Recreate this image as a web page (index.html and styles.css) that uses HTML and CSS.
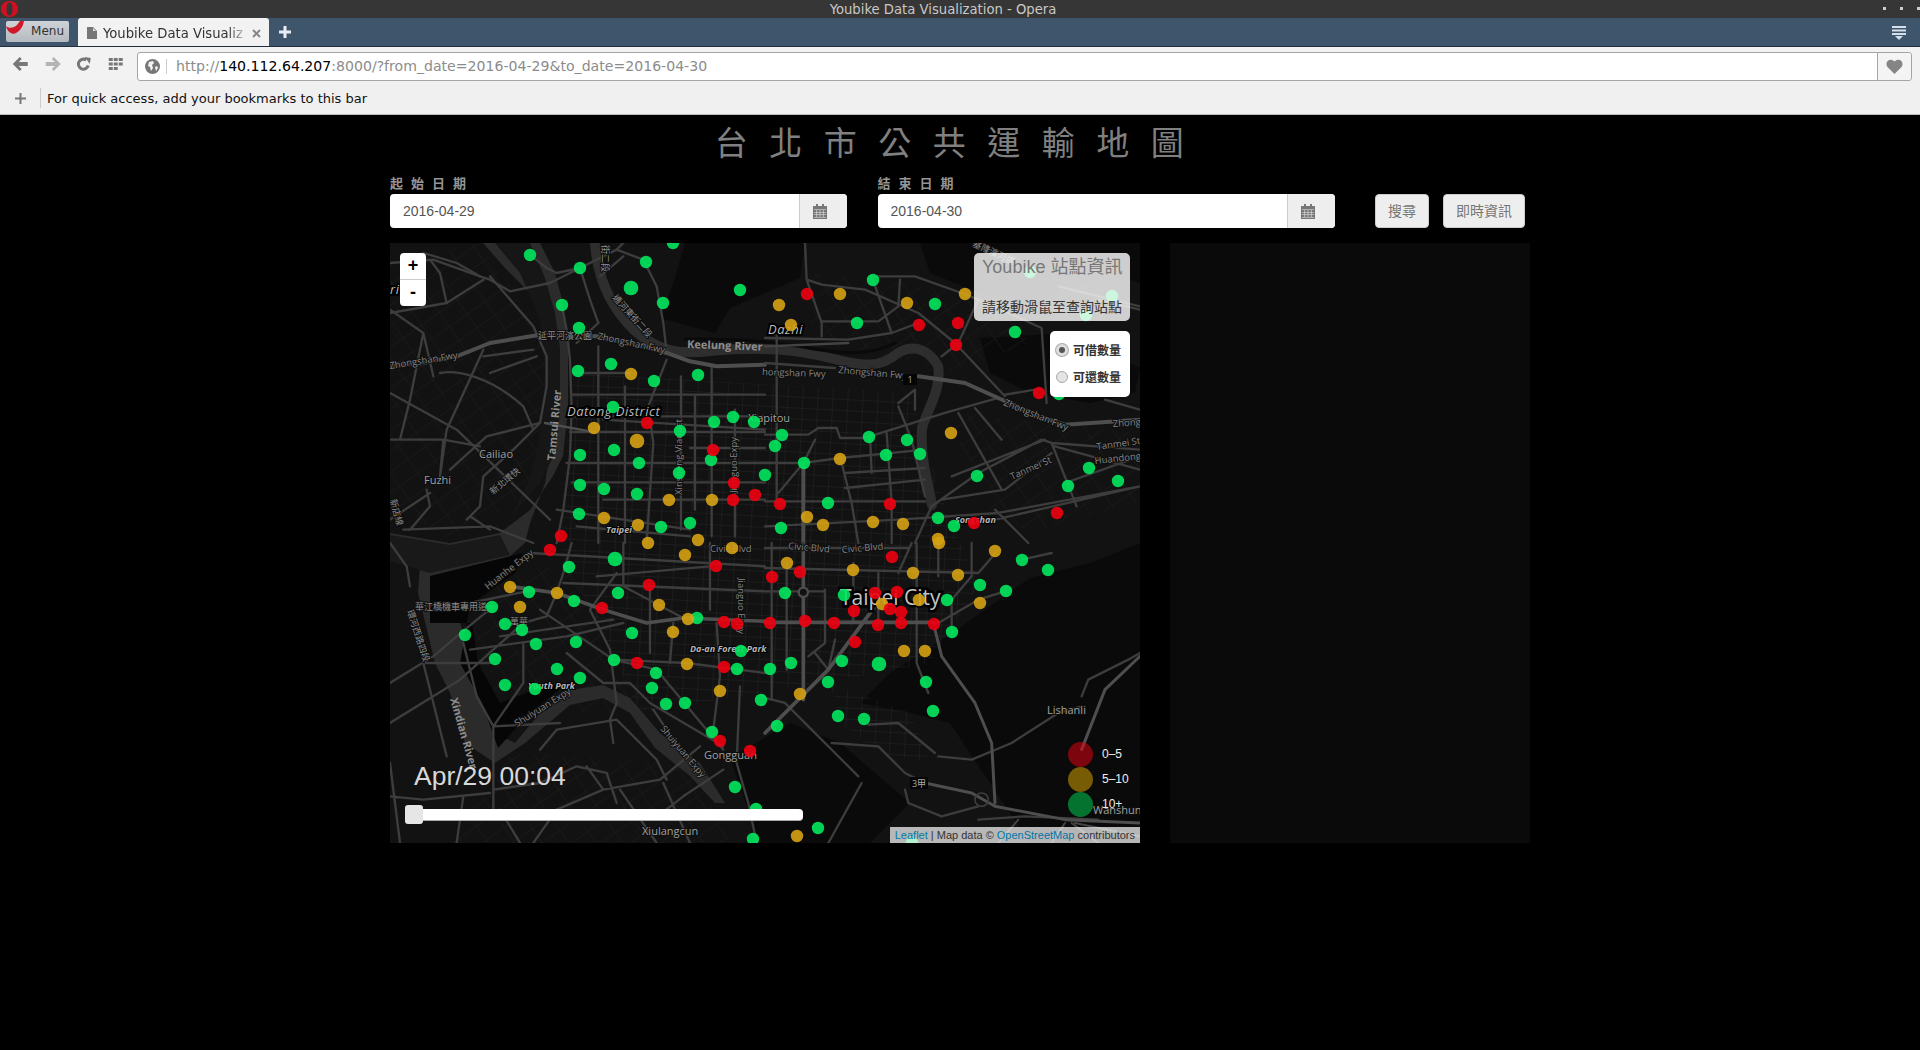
FILE: index.html
```html
<!DOCTYPE html>
<html lang="zh-Hant">
<head>
  <meta charset="UTF-8">
  <title>Youbike Data Visualization - Opera</title>
  <link rel="stylesheet" href="styles.css">
</head>
<body>
  <div class="titlebar">
    <svg class="opera-logo" width="19" height="18" viewBox="0 0 19 18"><path fill="#d01020" fill-rule="evenodd" d="M9.500 1c5 0 8.500 3.500 8.500 8s-3.500 8-8.500 8S1 13.500 1 9s3.500-8 8.500-8zm0 1.500C7.500 2.500 6.500 5 6.500 9s1 6.500 3 6.500 3-2.500 3-6.500-1-6.500-3-6.500z"/></svg>
    <span class="window-title">Youbike Data Visualization - Opera</span>
    <div class="window-btns"><i></i><i></i><i></i></div>
  </div>

  <div class="tabbar">
    <div class="menu-btn">
      <svg class="menu-logo" width="18" height="15" viewBox="0 0 18 15"><path fill="#d01828" d="M0 5c3 3 8 2 11-1l3-4h4c-1 7-7 14-12 12.500C3 11.500 1 9 0 5z"/></svg>
      <span>Menu</span>
    </div>
    <div class="tab">
      <svg width="10" height="12" viewBox="0 0 10 12"><path fill="#777" d="M0 0h6l4 4v8H0z"/><path fill="#ddd" d="M6 1v3h3z"/></svg>
      <span class="tab-title">Youbike Data Visualiz</span>
      <svg width="9" height="9" viewBox="0 0 9 9"><path stroke="#888" stroke-width="2" d="M1 1l7 7M8 1L1 8"/></svg>
    </div>
    <svg class="new-tab" width="12" height="12" viewBox="0 0 12 12"><path stroke="#e8eef4" stroke-width="3" d="M6 0v12M0 6h12"/></svg>
    <svg class="tab-list" width="14" height="14" viewBox="0 0 14 14"><path fill="#d5e0ea" d="M0 0h14v2H0zM0 3.500h14v2H0zM0 7h14v2H0zM3 10h8l-4 4z"/></svg>
  </div>

  <div class="toolbar">
    <svg class="nav-icon" width="16" height="14" viewBox="0 0 16 14"><path fill="#777" d="M7 0l2 2-3 3h9v4H6l3 3-2 2-7-7z"/></svg>
    <svg class="nav-icon" width="16" height="14" viewBox="0 0 16 14"><path fill="#b4b4b4" d="M9 0L7 2l3 3H1v4h9l-3 3 2 2 7-7z"/></svg>
    <svg class="nav-icon" width="14" height="14" viewBox="0 0 14 14"><path fill="none" stroke="#777" stroke-width="3" d="M11.500 8.500A5 5 0 1 1 9.500 3"/><path fill="#777" d="M8 0l6 1-1 6z"/></svg>
    <svg class="nav-icon" width="14" height="14" viewBox="0 0 14 14"><path fill="#777" d="M0 1h4v3H0zM5 1h4v3H5zM10 1h4v3h-4zM0 5.500h4v3H0zM5 5.500h4v3H5zM10 5.500h4v3h-4zM0 10h4v3H0zM5 10h4v3H5z"/></svg>
    <div class="address">
      <div class="site-icon">
        <svg width="15" height="15" viewBox="0 0 15 15"><circle cx="7.500" cy="7.500" r="7.500" fill="#777"/><path fill="#f4f4f4" d="M4 3l4-1 1 2-2 2 1 3-2 3-1-4-2-1zM10 8l2-1 1 2-2 3z"/></svg>
      </div>
      <div class="url"><span class="url-dim">http://</span>140.112.64.207<span class="url-dim">:8000/?from_date=2016-04-29&amp;to_date=2016-04-30</span></div>
      <div class="heart">
        <svg width="17" height="15" viewBox="0 0 17 15"><path fill="#858585" d="M8.500 15L1.500 8C-2 3 4-2 8.500 2.500 13-2 19 3 15.500 8z"/></svg>
      </div>
    </div>
  </div>

  <div class="bookmarks">
    <svg width="11" height="11" viewBox="0 0 11 11"><path stroke="#777" stroke-width="2" d="M5.500 0v11M0 5.500h11"/></svg>
    <span class="bookmarks-sep"></span>
    <span>For quick access, add your bookmarks to this bar</span>
  </div>

  <div class="page">
    <h1 class="page-title">台北市公共運輸地圖</h1>

    <div class="date-row">
      <div class="date-col">
        <label class="date-label">起始日期</label>
        <div class="input-group">
          <div class="date-input">2016-04-29</div>
          <div class="addon"><svg width="14" height="15" viewBox="0 0 14 15"><use href="#cal"/></svg></div>
        </div>
      </div>
      <div class="date-col">
        <label class="date-label">結束日期</label>
        <div class="input-group">
          <div class="date-input">2016-04-30</div>
          <div class="addon"><svg width="14" height="15" viewBox="0 0 14 15"><use href="#cal"/></svg></div>
        </div>
      </div>
      <div class="btn-col">
        <button class="btn">搜尋</button>
        <button class="btn">即時資訊</button>
      </div>
    </div>

    <div class="main-row">
      <div class="map">
        <svg class="map-base" width="750" height="600" viewBox="0 0 750 600">
          <defs>
            <symbol id="cal" viewBox="0 0 14 15">
              <path fill="#777" d="M0 2h3V0h2v2h4V0h2v2h3v13H0z"/>
              <path fill="#ececec" d="M1 5.500h12v.6H1zM1 8h12v.6H1zM1 10.500h12v.6H1zM1 13h12v.6H1zM3.500 5.500h.6v8h-.6zM6.700 5.500h.6v8h-.6zM9.900 5.500h.6v8h-.6z"/>
            </symbol>
            <pattern id="blocks" width="15" height="11" patternUnits="userSpaceOnUse" patternTransform="rotate(3)">
              <path fill="none" stroke="#262626" stroke-width="1" d="M0 0h15M0 0v11"/>
            </pattern>
            <pattern id="blocks2" width="22" height="17" patternUnits="userSpaceOnUse" patternTransform="rotate(-35)">
              <path fill="none" stroke="#1e1e1e" stroke-width="1" d="M0 0h22M0 0v17"/>
            </pattern>
          </defs>

          <!-- hills -->
          <g fill="#0a0a0a">
            <path d="M295 0H415L410 35 340 65 325 90 270 75 285 35z"/>
            <path d="M530 0H750V40L720 30 640 60 590 50 540 30z"/>
            <path d="M590 95L680 90 750 125 745 150 700 160 640 150 600 130z"/>
            <path d="M555 395L640 335 700 320 750 300V600H640L600 540 560 480 520 470 470 460 500 430z"/>
            <path d="M340 515L400 480 450 500 520 560 480 600H370z"/>
          </g>

          <!-- built up areas -->
          <path fill="url(#blocks)" d="M180 130L520 150 560 280 590 340 540 420 430 440 250 470 170 300z"/>
          <path fill="url(#blocks2)" d="M0 20L90 0 165 110 145 240 70 300 0 260z"/>
          <path fill="url(#blocks2)" d="M30 350L180 320 260 470 110 470 60 450z"/>
          <path fill="url(#blocks2)" d="M420 30L600 50 640 100 560 130 420 95z"/>
          <path fill="url(#blocks2)" d="M560 170L750 190 750 260 640 290 590 260z"/>
          <path fill="url(#blocks2)" d="M120 510L300 520 340 600H60z"/>
          <path fill="url(#blocks)" d="M440 440L520 470 540 520 490 510 450 480z"/>

          <!-- water -->
          <path fill="#2b2b2b" d="M93 0H150L165 30 173 60 176 80 178 100 178 167 173 213 163 233 140 267 110 290 60 300 0 290V318L30 322 28 350 45 420 60 450 75 500 105 520 135 500 180 462 213 455 240 470 265 505 300 533 325 560 335 560 310 520 270 490 240 455 213 442 180 447 150 470 125 500 105 490 90 440 70 380 50 340 110 322 135 300 140 280 155 240 160 210 157 170 157 110 152 80 140 50 115 25z"/>
          <path fill="#191919" d="M0 292L60 302 110 292 120 312 40 330 0 318z"/>
          <path fill="#060606" d="M40 333L133 310 125 330 80 362 70 420 92 460 108 505 140 470 175 442 150 445 110 460 88 420 82 380 40 380z"/>
          <path fill="#161616" d="M105 0H140L155 35 165 70 170 105 170 170 165 210 150 240 120 275 140 235 150 190 155 130 150 75 130 30z"/>
          <g fill="none" stroke-linejoin="round" stroke-linecap="round">
            <path stroke="#2e2e2e" stroke-width="10" d="M205 0C207 30 218 62 245 88 268 108 290 112 320 108 375 103 408 107 440 115 475 124 490 125 508 110 525 100 540 108 548 123 552 145 538 165 532 185 530 215 538 240 542 262"/>
            <path stroke="#0a0a0a" stroke-width="3" d="M295 96C330 96 360 96 400 102 430 106 470 118 505 100"/>
          </g>

          <!-- roads, in 3x coordinates per quarter of the map -->
          <g fill="none" stroke-linejoin="round" stroke-linecap="round">
            <!-- top left -->
            <g transform="scale(.3333)">
              <g stroke="#3d3d3d" stroke-width="7">
                <path d="M420 35L470 75 500 90 570 75 640 40 680 20 700 0M570 75L480 120 360 145 300 110 270 100 200 60 100 30M570 75L600 170 625 240M515 185L530 260 540 350 545 500 540 640 520 800 500 900"/>
                <path d="M550 390H720M545 455H1125M545 520H1125M540 567H1125M900 615H1125M530 660L1125 660M545 718H1125M640 770H1125M500 800L900 860M560 850L900 880"/>
                <path d="M625 310V900M705 430V900M830 350L775 490 790 600 770 900M873 400V860M965 370V880M1035 500V880M915 460V800"/>
                <path d="M680 20L760 50 800 130 820 240 830 330M630 100L700 40M625 240L560 300"/>
                <path d="M0 590H160L270 610M160 590L150 700M0 450L200 560 480 830M100 270L60 470 30 590M100 270L130 400M150 390C200 380 300 400 400 490L430 560M280 320L170 560 150 700M300 100L430 250 470 340 470 430 450 540 370 620 280 700M450 540L290 580 180 680M0 210L170 180M170 180L280 110M0 830L120 750M40 860L300 850 430 900M240 820L300 860M280 340L430 320M300 390L440 340M0 60L130 50 270 100M170 180L150 90 120 50M100 270L0 200M280 700L270 790 230 830M110 740L120 790 60 860M640 530L1125 560"/>
              </g>
              <path stroke="#4e4e4e" stroke-width="12" d="M0 370L100 360 200 340 300 300 450 275 620 280 750 305 830 330 900 355 980 370 1125 365"/>
              <path stroke="#4e4e4e" stroke-width="7" d="M465 540L600 565"/>
            </g>
            <!-- top right -->
            <g transform="translate(375 0) scale(.3333)">
              <g stroke="#3d3d3d" stroke-width="7">
                <path d="M120 0L125 110 170 125 300 140 460 210 570 300 720 460M125 110L170 240V280M170 235H340L400 190 405 110M330 100H450L590 150 640 170 830 255 845 480M0 285L250 290 380 270 460 240M380 270L320 100"/>
                <path d="M35 270V780M0 360L210 375M0 575H130L160 555H215L225 585H300L540 510 700 465M0 660L115 660 225 645 480 620M40 750L115 660 150 590M0 775H480M225 640L260 780 280 900M315 575L320 690M365 570L380 780V900M240 690L480 675M240 735L480 710M400 490L440 590 480 760M400 480L450 440V500"/>
                <path d="M450 900L500 790 640 690 830 590 860 600 935 790M530 770L720 740 860 630M560 700L840 590M690 830L1125 730M0 850L400 830 700 810 1125 730M870 610L1125 680M900 720L1125 640M580 510L710 740M630 495L710 590M690 800L790 900M810 440L720 455M1020 470L1125 500M860 600L1125 620"/>
                <path d="M640 170L580 300 530 340M1000 170L1125 200M880 130L1125 190"/>
              </g>
              <g stroke="#4e4e4e" stroke-width="12">
                <path d="M460 400L600 420 700 465 820 520 900 545 1125 530"/>
                <path d="M115 660V900"/>
              </g>
              <path stroke="#444" stroke-width="7" d="M0 310L250 300"/>
            </g>
            <!-- bottom left -->
            <g transform="translate(0 300) scale(.3333)">
              <g stroke="#3d3d3d" stroke-width="7">
                <path d="M545 0L520 90 500 150 470 220 400 240M620 100L960 70M420 30L1125 70M520 120L1125 145M700 130L880 225M240 180L410 145M100 185L300 190M450 200L670 350 890 360 1125 390"/>
                <path d="M330 280L670 230M240 320L530 280 700 240M0 420L130 340 200 280 310 190M0 540L210 410 310 320 400 240M100 360H300M400 300V420L310 550V800M220 300L260 460 310 550 510 540M680 90L600 200 660 320 680 480 660 530 670 600M530 330L640 420 720 420 780 480 1000 610M670 350L800 380 1000 620M790 500L870 620M1050 430L1040 660 1075 780 1100 900M980 240L990 400 970 560M960 0V200M780 130V330M850 240L840 360M700 0V130"/>
                <path d="M310 740L450 720 560 670 650 690 680 780M0 660L30 900M0 760L100 770 300 750M640 740L810 710 930 610M640 740L500 800 430 900M640 740L590 670M690 740L800 900M820 720L900 900M1000 680L880 760 790 830M100 360L170 640M450 620L500 560 680 530 800 650 830 710M0 0L50 70 60 130M330 800L390 900M220 760L200 900"/>
              </g>
              <path stroke="#4e4e4e" stroke-width="11" d="M360 130L500 150 640 200 770 240 880 225 1125 235"/>
            </g>
            <!-- bottom right -->
            <g transform="translate(375 300) scale(.3333)">
              <g stroke="#3d3d3d" stroke-width="7">
                <path d="M0 15H430M0 75L640 90M0 145H180M20 0V470M65 60V380M180 140V300L130 340M265 60V240M455 0V360L490 450M520 0V100M620 0V100L560 170V280M340 90V240M400 90L440 0M520 240L640 170 720 145M640 90L700 20"/>
                <path d="M0 465L60 480 130 550 280 700M200 600L340 610 420 690 480 720M520 640L620 650 740 600 880 510 950 490M310 545L400 540 510 630M950 460L970 410 1090 350 1125 330M190 900L290 720M420 740L430 780 530 820 640 790M640 830L780 820 1000 830M770 50L860 30M150 330L190 380 210 290"/>
              </g>
              <g stroke="#4e4e4e" stroke-width="11">
                <path d="M115 0V470M0 238H520"/>
                <path d="M330 190L190 380 0 570"/>
              </g>
              <g stroke="#4e4e4e" stroke-width="9">
                <path d="M480 720L620 750 690 790 900 830 1125 840M510 260L530 340 630 480 680 600 690 780"/>
                <path d="M950 620L1020 440 1125 340"/>
              </g>
              <circle cx="115" cy="148" r="14" fill="#111" stroke="#4e4e4e" stroke-width="7"/>
              <circle cx="650" cy="770" r="20" fill="none" stroke="#3d3d3d" stroke-width="5"/>
              <path stroke="#444" stroke-width="6" d="M700 900L760 830M860 900L900 840M1000 900L920 840M1125 880L930 840"/>
            </g>
          </g>

          <!-- labels -->
          <g class="map-labels">
            <text x="297" y="105" class="lbl-river" transform="rotate(2 297 105)">Keelung River</text>
            <text x="165" y="218" class="lbl-river" transform="rotate(-85 165 218)">Tamsui River</text>
            <text x="60" y="456" class="lbl-river" transform="rotate(74 60 456)">Xindian River</text>
            <text x="177" y="173" class="lbl-dist">Datong District</text>
            <text x="378" y="91" class="lbl-dist">Dazhi</text>
            <text x="0" y="51" class="lbl-dist">ri</text>
            <text x="358" y="179" class="lbl-place">Xiapitou</text>
            <text x="89" y="215" class="lbl-place">Cailiao</text>
            <text x="34" y="241" class="lbl-place">Fuzhi</text>
            <text x="216" y="290" class="lbl-small">Taipei</text>
            <text x="565" y="280" class="lbl-small">Songshan</text>
            <text x="300" y="409" class="lbl-small">Da-an Forest Park</text>
            <text x="138" y="446" class="lbl-small">Youth Park</text>
            <text x="314" y="516" class="lbl-place">Gongguan</text>
            <text x="252" y="592" class="lbl-place">Xiulangcun</text>
            <text x="657" y="471" class="lbl-place">Lishanli</text>
            <text x="703" y="571" class="lbl-place">Wanshund</text>
            <text x="450" y="362" class="lbl-city">Taipei City</text>
            <text x="372" y="132" class="lbl-road" transform="rotate(2 372 132)">hongshan Fwy</text>
            <text x="448" y="130" class="lbl-road" transform="rotate(5 448 130)">Zhongshan Fwy</text>
            <text x="207" y="96" class="lbl-road" transform="rotate(12 207 96)">Zhongshan Fwy</text>
            <text x="0" y="126" class="lbl-road" transform="rotate(-9 0 126)">Zhongshan Fwy</text>
            <text x="613" y="162" class="lbl-road" transform="rotate(22 613 162)">Zhongshan Fwy</text>
            <text x="723" y="184" class="lbl-road" transform="rotate(-4 723 184)">Zhong</text>
            <text x="622" y="237" class="lbl-road" transform="rotate(-24 622 237)">Tanmei St</text>
            <text x="707" y="207" class="lbl-road" transform="rotate(-8 707 207)">Tanmei St</text>
            <text x="705" y="221" class="lbl-road" transform="rotate(-6 705 221)">Huandong</text>
            <text x="292" y="252" class="lbl-road" transform="rotate(-90 292 252)">Xinsheng Viaduct</text>
            <text x="347" y="250" class="lbl-road" transform="rotate(-90 347 250)">Jianguo Expy</text>
            <text x="320" y="309" class="lbl-road">Civic Blvd</text>
            <text x="398" y="306" class="lbl-road" transform="rotate(5 398 306)">Civic Blvd</text>
            <text x="452" y="310" class="lbl-road" transform="rotate(-5 452 310)">Civic Blvd</text>
            <text x="348" y="335" class="lbl-road" transform="rotate(90 348 335)">Jianguo Expy</text>
            <text x="98" y="347" class="lbl-road" transform="rotate(-38 98 347)">Huanhe Expy</text>
            <text x="127" y="484" class="lbl-road" transform="rotate(-32 127 484)">Shuiyuan Expy</text>
            <text x="270" y="486" class="lbl-road" transform="rotate(50 270 486)">Shuiyuan Expy</text>
            <text x="148" y="96" class="lbl-cjk">延平河濱公園</text>
            <text x="25" y="367" class="lbl-cjk">華江橋機車專用道</text>
            <text x="120" y="382" class="lbl-cjk">萬華</text>
            <text x="222" y="55" class="lbl-cjk" transform="rotate(48 222 55)">通河東街二段</text>
            <text x="212" y="2" class="lbl-cjk" transform="rotate(90 212 2)">街二段</text>
            <text x="103" y="252" class="lbl-cjk" transform="rotate(-40 103 252)">新北環快</text>
            <text x="17" y="368" class="lbl-cjk" transform="rotate(72 17 368)">環河西路四段</text>
            <text x="0" y="257" class="lbl-cjk" transform="rotate(75 0 257)">新店線</text>
            <text x="582" y="3" class="lbl-cjk" transform="rotate(25 582 3)">基隆濱河道</text>
          </g>

          <g class="road-shield"><rect x="513" y="131" width="14" height="11"/><text x="520" y="140">1</text></g>
          <g class="road-shield"><rect x="520" y="534" width="18" height="12"/><text x="529" y="544">3甲</text></g>

          <g id="stations"></g>
        </svg>

        <div class="zoom-ctrl">
          <div class="zoom-btn">+</div>
          <div class="zoom-btn">-</div>
        </div>

        <div class="info">
          <h4 class="info-title">Youbike 站點資訊</h4>
          <div class="info-hint">請移動滑鼠至查詢站點</div>
        </div>

        <div class="mode-box">
          <label class="mode-item"><i class="radio checked"></i>可借數量</label>
          <label class="mode-item"><i class="radio"></i>可還數量</label>
        </div>

        <div class="time-box">
          <div class="time-text">Apr/29 00:04</div>
          <div class="slider"><div class="slider-handle"></div></div>
        </div>

        <div class="legend">
          <div class="legend-row"><i class="dot dot-red"></i>0–5</div>
          <div class="legend-row"><i class="dot dot-orange"></i>5–10</div>
          <div class="legend-row"><i class="dot dot-green"></i>10+</div>
        </div>

        <div class="attribution"><a>Leaflet</a> | Map data © <a>OpenStreetMap</a> contributors</div>
      </div>
      <div class="side-panel"></div>
    </div>
  </div>
  <script src="map.js"></script>
</body>
</html>
```

FILE: styles.css
```css
html, body {
  margin: 0;
  height: 1050px;
  overflow: hidden;
  background-color: #000;
  font-family: "Liberation Sans", "Noto Sans CJK TC", sans-serif;
}

/* browser chrome */
.titlebar {
  height: 18px;
  box-sizing: border-box;
  padding-right: 34px;
  background-color: #363636;
  position: relative;
  text-align: center;
  overflow: hidden;
}

.opera-logo {
  position: absolute;
  left: 0;
  top: 0;
}

.window-title {
  font: 13.200px/15px "DejaVu Sans", sans-serif;
  color: #c8c8c8;
}

.window-btns {
  position: absolute;
  right: 0;
  top: 7px;
  display: flex;
  gap: 14px;
}

.window-btns i {
  width: 3px;
  height: 3px;
  background-color: #ccc;
}

.tabbar {
  height: 29px;
  box-sizing: border-box;
  background-color: #3e556b;
  border-bottom: 1px solid #1f2f3d;
  display: flex;
  align-items: flex-end;
  position: relative;
}

.menu-btn {
  width: 63px;
  height: 21px;
  margin: 0 0 4px 6px;
  background: linear-gradient(#cfd3d7, #b4bac0);
  border-radius: 2px;
  font: 12px/21px "DejaVu Sans", sans-serif;
  color: #333;
  position: relative;
  text-align: right;
  box-sizing: border-box;
  padding-right: 5px;
}

.menu-logo {
  position: absolute;
  left: 0;
  top: 0;
}

.tab {
  width: 191px;
  height: 28px;
  margin-left: 9px;
  background-color: #f2f2f2;
  border-radius: 3px 3px 0 0;
  display: flex;
  align-items: center;
  box-sizing: border-box;
  padding: 2px 8px 0 9px;
  font: 13.200px "DejaVu Sans", sans-serif;
  color: #333;
}

.tab-title {
  flex: 1;
  margin-left: 6px;
  white-space: nowrap;
  overflow: hidden;
  -webkit-mask-image: linear-gradient(to right, #000 84%, transparent 98%);
  mask-image: linear-gradient(to right, #000 84%, transparent 98%);
}

.new-tab {
  margin: 0 0 8px 10px;
}

.tab-list {
  position: absolute;
  right: 14px;
  top: 8px;
}

.toolbar {
  height: 34px;
  background-color: #f2f2f2;
  display: flex;
  align-items: center;
  padding-left: 5px;
  box-sizing: border-box;
}

.nav-icon {
  flex: none;
  width: 31.500px;
}

.address {
  width: 1775px;
  height: 29px;
  margin: 4px 0 0 6px;
  box-sizing: border-box;
  background-color: #fff;
  border: 1px solid #a5a5a5;
  border-radius: 3px;
  display: flex;
  align-items: center;
  font: 14.100px "DejaVu Sans", sans-serif;
  color: #000;
}

.site-icon {
  width: 29px;
  display: flex;
  justify-content: center;
  border-right: 1px solid #ccc;
  box-sizing: border-box;
  flex: none;
}

.url {
  flex: 1;
  margin-left: 9px;
}

.url-dim {
  color: #8c8c8c;
}

.heart {
  width: 34px;
  height: 100%;
  background-color: #f4f4f4;
  border-left: 1px solid #a5a5a5;
  border-radius: 0 3px 3px 0;
  display: flex;
  align-items: center;
  justify-content: center;
  box-sizing: border-box;
}

.bookmarks {
  height: 34px;
  box-sizing: border-box;
  background-color: #f0f0f0;
  border-bottom: 1px solid #bbb;
  display: flex;
  align-items: center;
  padding: 1px 0 0 15px;
  font: 13px "DejaVu Sans", sans-serif;
  color: #111;
}

.bookmarks-sep {
  width: 1px;
  height: 20px;
  background-color: #ccc;
  margin: 0 6px 0 14px;
}

/* page */
.page {
  width: 1170px;
  margin: 0 auto;
}

.page-title {
  margin: 0;
  padding-top: 7px;
  height: 47px;
  box-sizing: border-box;
  text-align: center;
  font: 400 33px/38px "Noto Sans CJK TC", sans-serif;
  letter-spacing: 21.500px;
  color: #808080;
  white-space: nowrap;
}

.date-row {
  display: flex;
  height: 81px;
  padding-top: 15px;
  box-sizing: border-box;
}

.date-col {
  width: 487.500px;
  padding: 0 15.500px 0 15px;
  box-sizing: border-box;
}

.date-label {
  display: block;
  height: 17px;
  font: 700 13px/11px "Noto Sans CJK TC", sans-serif;
  letter-spacing: 8px;
  color: #959595;
}

.input-group {
  display: flex;
  height: 34px;
  background-color: #fff;
  border-radius: 4px;
  overflow: hidden;
}

.date-input {
  flex: 1;
  padding-left: 13px;
  font-size: 14px;
  line-height: 34px;
  color: #555;
}

.addon {
  width: 48px;
  padding-left: 13px;
  background-color: #eee;
  border-left: 1px solid #ccc;
  display: flex;
  align-items: center;
  box-sizing: border-box;
}

.btn-col {
  display: flex;
  align-items: flex-end;
  gap: 14px;
  padding: 0 0 15px 25px;
}

.btn {
  height: 34px;
  padding: 0 12px 2px;
  border: 1px solid #ccc;
  border-radius: 4px;
  background-color: #eee;
  font: 14px "Noto Sans CJK TC", sans-serif;
  color: #777;
}

.main-row {
  display: flex;
  padding-left: 15px;
  gap: 30px;
}

.map {
  width: 750px;
  height: 600px;
  background-color: #121212;
  position: relative;
  overflow: hidden;
}

.map-base {
  display: block;
}

.side-panel {
  width: 360px;
  height: 600px;
  background-color: #0a0a0a;
}

/* map labels */
.map-labels text {
  font-family: "Open Sans", sans-serif;
  fill: #8a8a8a;
  paint-order: stroke;
  stroke: #0e0e0e;
  stroke-width: 2px;
}

.map-labels .lbl-river {
  font-size: 11px;
  font-weight: 700;
  fill: #8e8e8e;
  stroke: none;
}

.map-labels .lbl-dist {
  font-size: 13px;
  font-style: italic;
  fill: #bbb;
  stroke: #000;
  stroke-width: 4px;
  letter-spacing: .5px;
}

.map-labels .lbl-city {
  font-size: 21px;
  fill: #c4c4c4;
  stroke: #000;
  stroke-width: 5px;
}

.map-labels .lbl-place {
  font-size: 11px;
  fill: #a0a0a0;
}

.map-labels .lbl-small {
  font-size: 9px;
  font-style: italic;
  font-weight: 700;
  fill: #b5b5b5;
  stroke: #000;
}

.map-labels .lbl-road {
  font-size: 9.500px;
  fill: #858585;
}

.map-labels .lbl-cjk {
  font-family: "Noto Sans CJK TC", sans-serif;
  font-size: 9px;
  fill: #8c8c8c;
}

.road-shield rect {
  fill: #050505;
}

.road-shield text {
  font: 9px "Open Sans", "Noto Sans CJK TC", sans-serif;
  fill: #aaa;
  text-anchor: middle;
}

.station {
  opacity: .9;
}

.st-green {
  fill: #00e85e;
}

.st-orange {
  fill: #d6a214;
}

.st-red {
  fill: #f00010;
}

/* map controls */
.zoom-ctrl {
  position: absolute;
  left: 10px;
  top: 10px;
  width: 26px;
  background-color: #fff;
  border-radius: 4px;
  overflow: hidden;
}

.zoom-btn {
  height: 26px;
  line-height: 25px;
  text-align: center;
  font-size: 18px;
  font-weight: 700;
  color: #000;
}

.zoom-btn + .zoom-btn {
  border-top: 1px solid #ccc;
}

.info {
  position: absolute;
  right: 10px;
  top: 10px;
  width: 156px;
  height: 68px;
  box-sizing: border-box;
  padding: 3px 8px;
  background-color: rgba(255, 255, 255, .8);
  border-radius: 5px;
}

.info-title {
  margin: 0 0 19px;
  font-size: 18px;
  line-height: 22px;
  font-weight: 400;
  color: #777;
  white-space: nowrap;
}

.info-hint {
  font-size: 14px;
  line-height: 20px;
  color: #333;
  white-space: nowrap;
}

.mode-box {
  position: absolute;
  right: 10px;
  top: 88px;
  width: 80px;
  height: 66px;
  box-sizing: border-box;
  padding: 5px 6px;
  background-color: #fff;
  border-radius: 5px;
}

.mode-item {
  display: flex;
  align-items: center;
  height: 27px;
  font-size: 12px;
  font-weight: 700;
  color: #333;
  white-space: nowrap;
}

.radio {
  width: 12px;
  height: 12px;
  margin-right: 5px;
  box-sizing: border-box;
  flex: none;
  border-radius: 50%;
  border: 1px solid #aaa;
  background-color: #e4e4e4;
}

.radio.checked {
  border: 3px solid #ddd;
  background-color: #555;
  box-shadow: 0 0 0 1px #aaa;
}

.time-box {
  position: absolute;
  left: 16px;
  top: 517px;
}

.time-text {
  margin-left: 8px;
  font-size: 26.500px;
  line-height: 32px;
  color: #d8d8d8;
}

.slider {
  width: 397px;
  height: 12px;
  margin-top: 17px;
  background-color: #fff;
  border-radius: 4px;
  border-bottom: 1px solid #aaa;
  box-sizing: border-box;
  position: relative;
}

.slider-handle {
  position: absolute;
  left: -1px;
  top: -4px;
  width: 18px;
  height: 19px;
  background-color: #e6e6e6;
  border-radius: 3px;
}

.legend {
  position: absolute;
  left: 677.500px;
  top: 498.500px;
}

.legend-row {
  display: flex;
  align-items: center;
  height: 25px;
  font-size: 12px;
  color: #eee;
  white-space: nowrap;
}

.dot {
  width: 25px;
  height: 25px;
  margin-right: 9.500px;
  border-radius: 50%;
  opacity: .5;
}

.dot-red {
  background-color: #f00010;
}

.dot-orange {
  background-color: #e6ac00;
}

.dot-green {
  background-color: #00dc55;
}

.attribution {
  position: absolute;
  right: 0;
  bottom: 0;
  padding: 0 5px;
  height: 16px;
  line-height: 16px;
  font-size: 11px;
  color: #333;
  background-color: rgba(255, 255, 255, .7);
  white-space: nowrap;
}

.attribution a {
  color: #0078a8;
}
```

FILE: map.js
```js
const stations = {
  green: [
    [140,12],[190,25],[256,19],[283,0],[172,62],[273,60],[350,47],[483,37],[467,80],[545,61],
    [625,89],[640,29],[722,53],[696,72],[189,85],[221,121],[188,128],[264,138],[308,132],[669,151],
    [223,164],[343,174],[324,179],[364,179],[290,188],[392,192],[385,203],[479,194],[517,197],[496,212],
    [530,211],[224,207],[190,212],[249,220],[321,217],[414,220],[289,230],[375,232],[587,233],[699,225],
    [678,243],[728,238],[190,242],[214,246],[247,251],[438,260],[189,271],[271,284],[300,280],[391,285],
    [548,275],[564,283],[179,324],[228,350],[139,349],[184,358],[102,364],[115,381],[132,387],[75,392],
    [146,401],[186,399],[242,390],[307,375],[395,350],[454,352],[557,357],[590,342],[616,348],[632,317],
    [658,327],[562,389],[351,408],[452,418],[401,420],[380,426],[347,426],[224,417],[105,416],[167,426],
    [190,435],[115,442],[145,446],[266,430],[262,445],[276,461],[295,460],[371,457],[438,439],[536,439],
    [448,473],[474,476],[543,468],[387,483],[322,489],[345,544],[366,566],[428,585],[363,596],[522,600]
  ],
  greenBig: [[241,45],[225,316],[489,421]],
  orange: [
    [389,62],[450,51],[401,82],[517,60],[575,51],[241,131],[204,185],[450,216],[561,190],[279,257],
    [322,257],[214,275],[248,282],[417,274],[433,282],[483,279],[513,281],[308,297],[548,296],[258,300],
    [295,312],[342,305],[397,320],[463,327],[549,300],[605,308],[523,330],[568,332],[120,344],[167,350],
    [130,364],[269,362],[492,361],[529,357],[590,360],[298,376],[283,389],[514,408],[535,408],[297,421],
    [330,448],[410,451],[407,593]
  ],
  orangeBig: [[247,198]],
  red: [
    [417,51],[529,82],[568,80],[566,102],[649,150],[257,180],[323,207],[344,240],[365,252],[343,257],
    [390,261],[500,261],[667,270],[584,280],[171,293],[160,307],[326,323],[382,334],[410,329],[502,314],
    [259,342],[212,365],[485,350],[507,349],[464,368],[500,366],[511,369],[334,379],[347,381],[380,380],
    [415,378],[444,380],[488,382],[511,380],[544,381],[465,399],[247,420],[334,424],[330,498],[360,508]
  ]
};

const layer = document.getElementById('stations');

function addStations(list, colorClass, radius) {
  list.forEach(([x, y]) => {
    const dot = document.createElementNS('http://www.w3.org/2000/svg', 'circle');
    dot.setAttribute('cx', x);
    dot.setAttribute('cy', y);
    dot.setAttribute('r', radius);
    dot.setAttribute('class', 'station ' + colorClass);
    layer.appendChild(dot);
  });
}

addStations(stations.green, 'st-green', 6.2);
addStations(stations.greenBig, 'st-green', 7.3);
addStations(stations.orange, 'st-orange', 6.2);
addStations(stations.orangeBig, 'st-orange', 7.3);
addStations(stations.red, 'st-red', 6.2);
```
